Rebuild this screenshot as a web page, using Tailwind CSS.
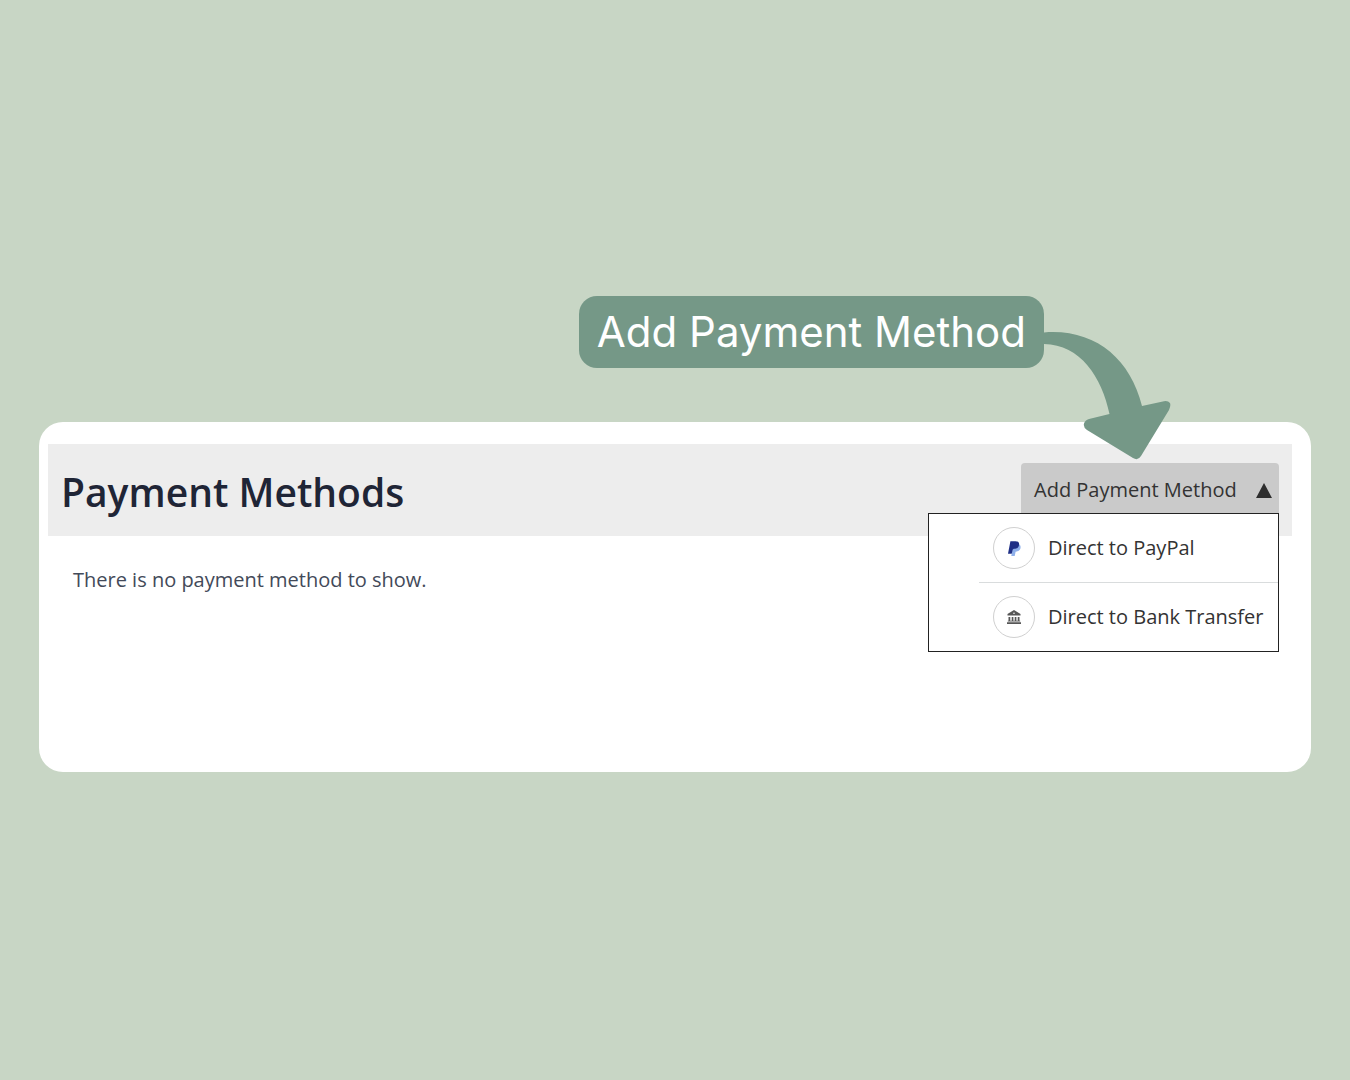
<!DOCTYPE html>
<html lang="en">
<head>
  <meta charset="UTF-8">
  <meta name="viewport" content="width=device-width, initial-scale=1.0">
  <title>Payment Methods</title>
  <script src="https://cdn.jsdelivr.net/npm/@tailwindcss/browser@4"></script>
</head>
<body class="bg-[#c8d6c5] font-['Open_Sans','Noto_Sans',sans-serif]">
  <main class="min-h-screen flex flex-col px-[39px] pt-[296px] pb-20">

    <!-- callout -->
    <div class="relative self-end mr-[267px] h-[72px] px-[18px] flex items-center rounded-[18px] bg-[#759887]">
      <p class="font-['Inter',sans-serif] text-[42px] leading-[48px] text-white whitespace-nowrap">Add Payment Method</p>
      <svg class="absolute z-20 left-full top-9 w-[128px] h-[128px]" viewBox="0 0 128 128" fill="#759887" aria-hidden="true">
        <path d="M-1 .5C49-4 86 25 98 74L120 69.200Q124 68.500 126 71Q127 74 125 78L97 124Q94 129 89 126L43 98Q39 95 40 91.500Q41 88 45 87L65.500 82C58 45 36 12-1 12Z"/>
      </svg>
    </div>

    <section class="mt-[54px] min-h-[350px] pt-[22px] pl-[9px] pr-[19px] rounded-3xl bg-white">
      <header class="flex items-center justify-between h-[92px] px-[13px] bg-[#ededed]">
        <h1 class="text-[39px] leading-[48px] font-semibold text-[#1f2536] pt-1">Payment Methods</h1>
        <div class="relative">
          <button type="button" aria-expanded="true" aria-controls="methods" class="flex items-center justify-between w-[258px] h-[54px] pl-[13px] pr-[7px] rounded-t bg-[#cacaca] text-xl text-[#333333] whitespace-nowrap">
            Add Payment Method
            <svg class="w-4 h-[15px]" viewBox="0 0 16 15" fill="#2e2e2e" aria-hidden="true"><path d="M8 0L16 15H0Z"/></svg>
          </button>
          <ul id="methods" class="absolute right-0 top-[50px] w-[351px] pl-[50px] border border-[#222222] bg-white">
            <li class="border-b border-[#d9dcdd]">
              <button type="button" class="flex items-center gap-[13px] w-full h-[68px] pl-[14px] text-xl text-[#333333] whitespace-nowrap">
                <span class="grid place-items-center size-[42px] shrink-0 rounded-full border border-[#d0d0d0]">
                  <svg class="w-[13px] h-[15px]" viewBox="0 0 13 15" aria-hidden="true">
                    <path fill="#8fb0ea" d="M5 5L11.300 3.500C13.600 4.800 13 10.200 8.500 10.500L7.600 10.700L6.700 15H3.300Z"/>
                    <path fill="#1f2f86" d="M2.400.3H7.500C10.300.3 11.600 1.700 11 4.200C10.400 6.900 8.500 7.800 5.800 7.800L4.800 8.400L3.700 12.700H0Z"/>
                  </svg>
                </span>
                Direct to PayPal
              </button>
            </li>
            <li>
              <button type="button" class="flex items-center gap-[13px] w-full h-[68px] pl-[14px] text-xl text-[#333333] whitespace-nowrap">
                <span class="grid place-items-center size-[42px] shrink-0 rounded-full border border-[#d0d0d0]">
                  <svg class="w-[14px] h-[14px]" viewBox="0 0 14 14" fill="#565656" aria-hidden="true">
                    <path fill-rule="evenodd" d="M7 0L13.500 4V5.600H.5V4ZM7 2.500A.8.8 0 1 0 7 4.100A.8.8 0 1 0 7 2.500Z"/>
                    <path d="M1.500 7H3.300V11H1.500ZM4.700 7H6.400V11H4.700ZM7.700 7H9.400V11H7.700ZM10.700 7H12.500V11H10.700ZM.8 10.700H13.200V11.500H.8ZM0 12.300H14V14H0Z"/>
                  </svg>
                </span>
                Direct to Bank Transfer
              </button>
            </li>
          </ul>
        </div>
      </header>
      <p class="pt-[30px] pl-[25px] text-xl text-[#434a59]">There is no payment method to show.</p>
    </section>
  </main>
</body>
</html>
